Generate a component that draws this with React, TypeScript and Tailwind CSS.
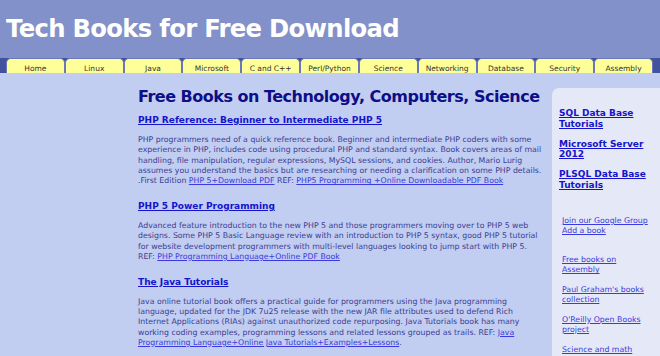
import React from 'react';

const tabs = ['Home', 'Linux', 'Java', 'Microsoft', 'C and C++', 'Perl/Python', 'Science', 'Networking', 'Database', 'Security', 'Assembly'];

const books = [
  {
    title: 'PHP Reference: Beginner to Intermediate PHP 5',
    text: 'PHP programmers need of a quick reference book. Beginner and intermediate PHP coders with some experience in PHP, includes code using procedural PHP and standard syntax. Book covers areas of mail handling, file manipulation, regular expressions, MySQL sessions, and cookies. Author, Mario Lurig assumes you understand the basics but are researching or needing a clarification on some PHP details. .First Edition ',
    links: [
      { pre: '', label: 'PHP 5+Download PDF' },
      { pre: ' REF: ', label: 'PHP5 Programming +Online Downloadable PDF Book' },
    ],
    end: '',
  },
  {
    title: 'PHP 5 Power Programming',
    text: 'Advanced feature introduction to the new PHP 5 and those programmers moving over to PHP 5 web designs. Some PHP 5 Basic Language review with an introduction to PHP 5 syntax, good PHP 5 tutorial for website development programmers with multi-level languages looking to jump start with PHP 5. REF: ',
    links: [{ pre: '', label: 'PHP Programming Language+Online PDF Book' }],
    end: '',
  },
  {
    title: 'The Java Tutorials',
    text: 'Java online tutorial book offers a practical guide for programmers using the Java programming language, updated for the JDK 7u25 release with the new JAR file attributes used to defend Rich Internet Applications (RIAs) against unauthorized code repurposing. Java Tutorials book has many working coding examples, programming lessons and related lessons grouped as trails. REF: ',
    links: [{ pre: '', label: 'Java Programming Language+Online Java Tutorials+Examples+Lessons' }],
    end: '.',
  },
];

const sideGroups = [
  ['Join our Google Group', 'Add a book'],
  ['Free books on Assembly'],
  ["Paul Graham's books collection"],
  ["O'Reilly Open Books project"],
  ['Science and math databases'],
];

export default function App() {
  return (
    <div className="w-[660px] h-[356px] overflow-hidden bg-[#c1cdf1] font-['DejaVu_Sans',Verdana,sans-serif]">
      <div className="h-[58px] bg-[#8291c9] flex items-center px-[6px] pt-[1px]">
        <h1 className="text-white font-bold text-[24.3px] leading-none tracking-[-0.7px]">Tech Books for Free Download</h1>
      </div>
      <div className="h-[15px] bg-[#8291c9] flex">
        <div className="w-[6px] bg-[#41529f]"></div>
        <div className="flex-1 flex bg-[#41529f]">
          {tabs.map((t) => (
            <div
              key={t}
              className="flex-1 rounded-t-[5px] bg-[#ffff99] border-t border-x border-[#6a78b8] flex items-end justify-center pb-[1px] text-[7.5px] text-[#333333] leading-none"
            >
              {t}
            </div>
          ))}
        </div>
        <div className="w-[7px] bg-[#41529f]"></div>
      </div>
      <div className="flex pt-[15px]">
        <div className="w-[138px] shrink-0"></div>
        <div className="w-[404px] shrink-0">
          <h2 className="text-[#0e0e86] font-bold text-[16px] leading-[18px] tracking-[-0.5px] whitespace-nowrap mb-[8px]">
            Free Books on Technology, Computers, Science
          </h2>
          {books.map((b) => (
            <div key={b.title} className="mb-[13.5px]">
              <a href="#" className="block text-[#1414cc] font-bold underline text-[9px] leading-[12px]">
                {b.title}
              </a>
              <p className="mt-[9px] text-[#3d3d92] text-[7.8px] leading-[10.3px]">
                {b.text}
                {b.links.map((l) => (
                  <span key={l.label}>
                    {l.pre}
                    <a href="#" className="text-[#3a3ae0] underline">{l.label}</a>
                  </span>
                ))}
                {b.end}
              </p>
            </div>
          ))}
        </div>
        <div className="ml-[10px] flex-1 bg-[#e5e8f6] rounded-tl-[7px] h-[300px] pl-[7px] pr-[2px] pt-[20px]">
          <div className="flex flex-col gap-[9.5px]">
            {['SQL Data Base Tutorials', 'Microsoft Server 2012', 'PLSQL Data Base Tutorials'].map((s) => (
              <a key={s} href="#" className="text-[#1414cc] font-bold underline text-[9px] leading-[10.5px]">
                {s}
              </a>
            ))}
          </div>
          <div className="mt-[26px] pl-[3px] w-[92px] flex flex-col gap-[9.3px]">
            {sideGroups.map((g, i) => (
              <div key={i} className={i === 0 ? 'flex flex-col mb-[9px]' : 'flex flex-col'}>
                {g.map((s) => (
                  <a key={s} href="#" className="text-[#3a3ae0] underline text-[7.8px] leading-[10.3px]">
                    {s}
                  </a>
                ))}
              </div>
            ))}
          </div>
        </div>
      </div>
    </div>
  );
}
